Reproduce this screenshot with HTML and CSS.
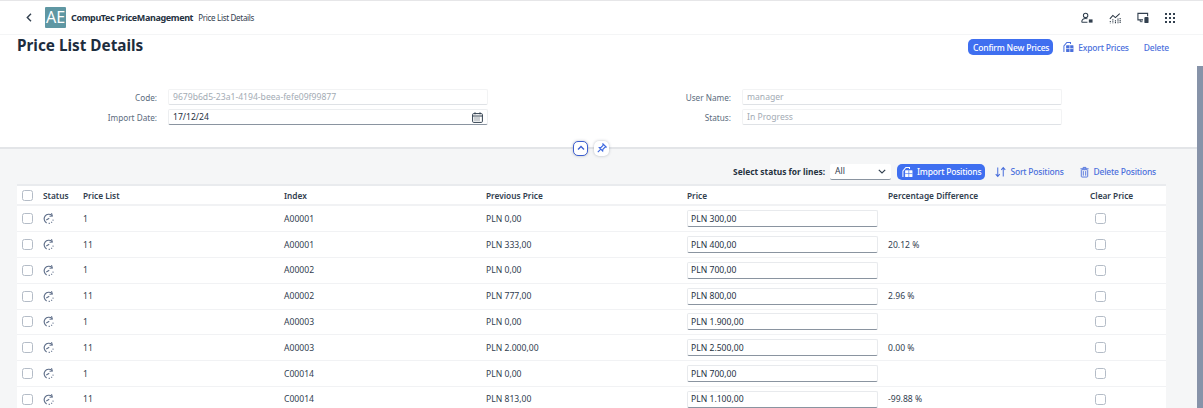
FILE: index.html
```html
<!DOCTYPE html>
<html lang="en">
<head>
<meta charset="utf-8">
<title>Price List Details</title>
<link rel="stylesheet" href="styles.css">
</head>
<body>
<svg class="defs" width="0" height="0" aria-hidden="true">
  <symbol id="status" viewBox="0 0 12 12">
    <path d="M9.800 2.800A5 5 0 1 0 4 10.800" fill="none" stroke="currentColor" stroke-width="1.200"/>
    <path d="M9.300 .2l.9 3-3.100.3" fill="none" stroke="currentColor" stroke-width="1.100"/>
    <path d="M3.600 7.600l3.200-1.800" fill="none" stroke="currentColor" stroke-width="1.200"/>
    <path d="M6.200 11.300h1.200M9 10.500l.9-.8M10.800 8.300l.3-1.100" fill="none" stroke="currentColor" stroke-width="1.200"/>
  </symbol>
  <symbol id="box" viewBox="0 0 12 12">
    <path d="M1 11.500V4.800L4.200 1H8.200V2.600" fill="none" stroke="currentColor" stroke-width="1.100"/>
    <rect x="3.400" y="4" width="8" height="7.500" rx=".6" fill="currentColor"/>
    <path class="ln" d="M3.400 7.700h8M7.400 4v7.500" stroke-width=".7"/>
  </symbol>
</svg>

<header class="shell">
  <button class="back" aria-label="Back">
    <svg width="6" height="9" viewBox="0 0 6 9"><path d="M5 .8L1.300 4.500 5 8.200" fill="none" stroke="#32404f" stroke-width="1.400"/></svg>
  </button>
  <div class="logo">AE</div>
  <strong class="app">CompuTec PriceManagement</strong>
  <span class="crumb">Price List Details</span>
  <div class="shell-icons">
    <svg width="12" height="12" viewBox="0 0 13 12"><circle cx="5" cy="3.200" r="2.400" fill="none" stroke="#32404f" stroke-width="1.100"/><path d="M.8 10.500C.8 7.800 2.500 6.600 5 6.600c.8 0 1.500.1 2 .4M.8 10.500H7" fill="none" stroke="#32404f" stroke-width="1.100"/><rect x="8.500" y="7.500" width="4" height="3.500" fill="#32404f"/></svg>
    <svg width="12" height="12" viewBox="0 0 14 12"><path d="M1 7l3.500-4 3 2.500L12.500 1" fill="none" stroke="#26323f" stroke-width="1.200"/><path d="M1.500 9.500v2.500M4.500 7.500v4.500M7.500 8.500v3.500M10.500 6.500v5.500M13 6v6" stroke="#26323f" stroke-width="1.200" stroke-dasharray="1.500 .7"/></svg>
    <svg width="12" height="12" viewBox="0 0 13 12"><path d="M6.500 8H1V1h10.500v3" fill="none" stroke="#32404f" stroke-width="1.200"/><path d="M3.500 8v2H6" fill="none" stroke="#32404f" stroke-width="1"/><rect x="8" y="5" width="4.500" height="6.500" rx="1" fill="#32404f"/></svg>
    <svg width="10" height="10" viewBox="0 0 10 10" fill="#32404f"><rect width="2" height="2"/><rect x="4" width="2" height="2"/><rect x="8" width="2" height="2"/><rect y="4" width="2" height="2"/><rect x="4" y="4" width="2" height="2"/><rect x="8" y="4" width="2" height="2"/><rect y="8" width="2" height="2"/><rect x="4" y="8" width="2" height="2"/><rect x="8" y="8" width="2" height="2"/></svg>
  </div>
</header>

<section class="object-head">
  <div class="title-row">
    <h1>Price List Details</h1>
    <div class="actions">
      <button class="btn primary">Confirm New Prices</button>
      <button class="btn link"><svg class="ic"><use href="#box"/></svg>Export Prices</button>
      <button class="btn link delete">Delete</button>
    </div>
  </div>
  <form class="form">
    <label>Code:</label><div class="field ro">9679b6d5-23a1-4194-beea-fefe09f99877</div>
    <label>User Name:</label><div class="field ro">manager</div>
    <label>Import Date:</label>
    <div class="field date">17/12/24
      <svg width="11" height="11" viewBox="0 0 11 11"><rect x=".6" y="1.600" width="9.800" height="8.800" rx="1" fill="none" stroke="#32404f" stroke-width="1"/><path d="M.6 4h9.800" stroke="#32404f" stroke-width="1"/><path d="M3 .3v2M8 .3v2" stroke="#32404f" stroke-width="1"/><path d="M2.500 6h6M2.500 8h6" stroke="#32404f" stroke-dasharray="1 1"/></svg>
    </div>
    <label>Status:</label><div class="field ro">In Progress</div>
  </form>
</section>

<div class="divider">
  <button class="round active" aria-label="Collapse">
    <svg width="8" height="6" viewBox="0 0 8 6"><path d="M1 4.500l3-3 3 3" fill="none" stroke="#3d5fd0" stroke-width="1.400"/></svg>
  </button>
  <button class="round" aria-label="Pin">
    <svg width="10" height="10" viewBox="0 0 10 10"><path d="M6 .8l3.200 3.200-1.300.3-2 2-.2 1.700L2.300 4.600l1.700-.2 2-2zM3.800 6.200L.8 9.200" fill="none" stroke="#3d68e0" stroke-width="1.100"/></svg>
  </button>
</div>

<main class="content">
  <div class="toolbar">
    <span class="select-label">Select status for lines:</span>
    <div class="select">All
      <svg width="8" height="5" viewBox="0 0 8 5"><path d="M.8 .8L4 4l3.200-3.200" fill="none" stroke="#32404f" stroke-width="1.200"/></svg>
    </div>
    <button class="btn primary tool"><svg class="ic"><use href="#box"/></svg>Import Positions</button>
    <button class="btn link tool sort"><svg class="ic" viewBox="0 0 12 12"><path d="M3 1v9.500M.8 8.300L3 10.800l2.200-2.500M9 11V1.500M6.800 3.700L9 1.200l2.200 2.500" fill="none" stroke="currentColor" stroke-width="1.100"/></svg>Sort Positions</button>
    <button class="btn link tool"><svg class="ic" viewBox="0 0 12 12"><path d="M1.500 2.500h9M4.500 2.500V1h3v1.500" fill="none" stroke="currentColor" stroke-width="1"/><rect x="2.500" y="3.500" width="7" height="8" rx=".8" fill="none" stroke="currentColor" stroke-width="1"/><path d="M4.700 5v5M7.300 5v5" stroke="currentColor"/></svg>Delete Positions</button>
  </div>

  <div class="table">
    <div class="row head">
      <span class="cb"></span><span>Status</span><span>Price List</span><span>Index</span><span>Previous Price</span><span>Price</span><span>Percentage Difference</span><span>Clear Price</span>
    </div>
    <div class="row"><span class="cb"></span><svg class="st"><use href="#status"/></svg><span>1</span><span>A00001</span><span>PLN 0,00</span><div class="price">PLN 300,00</div><span></span><span class="cb clear"></span></div>
    <div class="row"><span class="cb"></span><svg class="st"><use href="#status"/></svg><span>11</span><span>A00001</span><span>PLN 333,00</span><div class="price">PLN 400,00</div><span>20.12 %</span><span class="cb clear"></span></div>
    <div class="row"><span class="cb"></span><svg class="st"><use href="#status"/></svg><span>1</span><span>A00002</span><span>PLN 0,00</span><div class="price">PLN 700,00</div><span></span><span class="cb clear"></span></div>
    <div class="row"><span class="cb"></span><svg class="st"><use href="#status"/></svg><span>11</span><span>A00002</span><span>PLN 777,00</span><div class="price">PLN 800,00</div><span>2.96 %</span><span class="cb clear"></span></div>
    <div class="row"><span class="cb"></span><svg class="st"><use href="#status"/></svg><span>1</span><span>A00003</span><span>PLN 0,00</span><div class="price">PLN 1.900,00</div><span></span><span class="cb clear"></span></div>
    <div class="row"><span class="cb"></span><svg class="st"><use href="#status"/></svg><span>11</span><span>A00003</span><span>PLN 2.000,00</span><div class="price">PLN 2.500,00</div><span>0.00 %</span><span class="cb clear"></span></div>
    <div class="row"><span class="cb"></span><svg class="st"><use href="#status"/></svg><span>1</span><span>C00014</span><span>PLN 0,00</span><div class="price">PLN 700,00</div><span></span><span class="cb clear"></span></div>
    <div class="row"><span class="cb"></span><svg class="st"><use href="#status"/></svg><span>11</span><span>C00014</span><span>PLN 813,00</span><div class="price">PLN 1.100,00</div><span>-99.88 %</span><span class="cb clear"></span></div>
  </div>
</main>
<div class="scrollbar"></div>
</body>
</html>
```
FILE: styles.css
```css
* { box-sizing: border-box; }
html, body { margin: 0; height: 408px; overflow: hidden; }
body {
  font-family: "Noto Sans", "Open Sans", sans-serif;
  font-size: 8.600px;
  color: #32404f;
  background: #fff;
  position: relative;
}
.defs { position: absolute; }
button { font: inherit; border: 0; background: none; padding: 0; }

.shell {
  height: 35px;
  border-top: 1px solid #e6e6e8;
  border-bottom: 1px solid #f4f5f6;
  display: flex;
  align-items: center;
  padding-left: 26px;
}
.back { width: 6px; height: 9px; display: flex; margin-right: 13px; }
.logo {
  width: 21px; height: 21px;
  background: #5f97a3;
  color: #fff;
  border-radius: 1px;
  font-size: 16px;
  line-height: 21px;
  text-align: center;
  margin-right: 5px;
}
.app { font-size: 9px; letter-spacing: -.37px; font-weight: 700; color: #26323f; margin-right: 5px; }
.crumb { font-size: 8px; letter-spacing: -.3px; color: #32404f; }
.shell-icons {
  margin-left: auto;
  margin-right: 28px;
  display: flex;
  align-items: center;
  gap: 16px;
}

.object-head { height: 112px; background: #fff; }
.title-row {
  display: flex;
  justify-content: space-between;
  align-items: flex-start;
  padding: 0 34px 0 17px;
}
h1 { margin: 0; font-size: 15.300px; line-height: 20px; font-weight: 700; color: #1d2d3e; }
.actions { display: flex; align-items: center; gap: 10px; margin-top: 4px; }
.btn {
  display: inline-flex; align-items: center; gap: 4px;
  font-size: 8.500px; letter-spacing: -.2px; font-weight: 500;
  height: 16px; white-space: nowrap;
}
.btn.primary { background: #3f6ff0; color: #fff; border-radius: 5px; padding: 0 4px 0 5px; --ln: #3f6ff0; }
.btn.link { color: #4a6fdc; --ln: #fff; }
.delete { margin-left: 5px; }
.ic { width: 11px; height: 12px; flex: none; }
.ln { stroke: var(--ln, #fff); fill: none; }

.form {
  display: grid;
  grid-template-columns: 157px 320px 232px 320px;
  column-gap: 11px;
  row-gap: 4px;
  margin-top: 34px;
  align-items: center;
}
.form label { text-align: right; color: #5b6b7d; font-size: 8.200px; }
.field {
  height: 16px;
  border: 1px solid #f2f3f4;
  border-bottom: 1px solid #dfe2e6;
  border-radius: 2px;
  padding: 0 4px;
  display: flex; align-items: center;
  background: #fff;
}
.field.ro { color: #a3abb4; }
.field.date {
  color: #26323f;
  border-color: #eceef0 #eceef0 #8a94a0;
  justify-content: space-between;
}

.divider {
  height: 2px;
  background: #e3e5e8;
  display: flex;
  justify-content: center;
  gap: 6px;
  align-items: center;
  padding-right: 21px;
}
.round {
  width: 15px; height: 15px;
  flex: none;
  display: flex; align-items: center; justify-content: center;
  border-radius: 5px;
  background: #fff;
  box-shadow: 0 0 3px rgba(60, 70, 90, .35);
  position: relative;
}
.round.active { border: 1.500px solid #3d5fd0; }

.content { background: #f5f6f7; height: 259px; padding-left: 17px; }
.toolbar {
  height: 35px;
  width: 1139px;
  display: flex;
  align-items: center;
  justify-content: flex-end;
  padding-top: 10px;
}
.select-label { font-size: 8.400px; font-weight: 700; color: #26323f; margin-right: 5px; }
.select {
  width: 61px; height: 16px;
  background: #fff;
  border-radius: 2px;
  border-bottom: 1px solid #8a94a0;
  padding: 0 5px;
  display: flex; align-items: center; justify-content: space-between;
  margin-right: 6px;
}
.tool { margin-right: 10px; }
.tool.sort { margin-right: 15px; }
.tool:last-child { margin-right: 0; }

.table { background: #fff; width: 1149px; }
.row {
  display: grid;
  grid-template-columns: 26px 40px 201px 202px 201px 201px 202px 76px;
  align-items: center;
  height: 25.800px;
  border-bottom: 1px solid #f1f2f4;
}
.row.head {
  height: 22.400px;
  border-top: 2px solid #e9ebee;
  border-bottom: 2px solid #f1f2f4;
  font-size: 8.300px;
  font-weight: 600;
  color: #32404f;
}
.cb {
  width: 11px; height: 11px;
  margin-left: 5px;
  border: 1px solid #b4bcc7;
  border-radius: 2.500px;
  background: #fff;
}
.st { width: 11px; height: 11px; color: #5d6d88; }
.price {
  width: 191px; height: 17px;
  border: 1px solid #e8eaed;
  border-bottom: 1px solid #8a94a0;
  border-radius: 2px;
  color: #26323f;
  padding: 0 3px;
  display: flex; align-items: center;
}

.scrollbar {
  position: absolute;
  top: 66px; right: 0; bottom: 0;
  width: 6px;
  background: #8793a9;
}
```
